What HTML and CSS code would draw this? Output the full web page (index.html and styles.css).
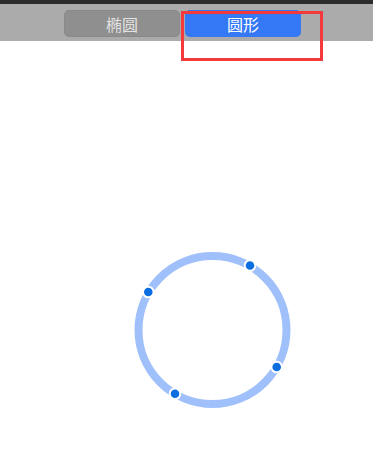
FILE: index.html
```html
<!DOCTYPE html>
<html lang="zh">
<head>
<meta charset="utf-8">
<link rel="stylesheet" href="styles.css">
</head>
<body>
<div class="topbar"></div>
<div class="segbar">
  <div class="seg seg-off">椭圆</div>
  <div class="seg seg-on">圆形</div>
</div>
<div class="highlight"></div>
<svg class="canvas" width="373" height="412" viewBox="0 0 373 412">
  <circle cx="212.5" cy="289" r="74" fill="none" stroke="#a0c0fb" stroke-width="8"/>
  <g fill="#0a6de0" stroke="#ffffff" stroke-width="2">
    <circle cx="250" cy="224.5" r="5.3"/>
    <circle cx="148.3" cy="251" r="5.3"/>
    <circle cx="276.7" cy="326" r="5.3"/>
    <circle cx="175" cy="352.7" r="5.3"/>
  </g>
</svg>
</body>
</html>
```
FILE: styles.css
```css
html, body {
  margin: 0;
  padding: 0;
  background: #ffffff;
  width: 373px;
  height: 453px;
  overflow: hidden;
  font-family: "Noto Sans CJK SC", "Noto Sans", sans-serif;
}
.topbar {
  height: 4px;
  background: #2c2c2c;
}
.segbar {
  height: 37px;
  box-sizing: border-box;
  background: #ababab;
  display: flex;
  gap: 5px;
  padding-left: 64px;
  padding-top: 6px;
}
.seg {
  width: 116px;
  height: 27px;
  box-sizing: border-box;
  border-radius: 5px;
  display: flex;
  align-items: center;
  justify-content: center;
  font-size: 16px;
  line-height: 1;
}
.seg-off {
  background: #8f8f8f;
  border: 1px solid #898989;
  color: #e2e2e2;
}
.seg-on {
  background: #3478f6;
  color: #ffffff;
}
.highlight {
  position: absolute;
  left: 181px;
  top: 11px;
  width: 142px;
  height: 50px;
  box-sizing: border-box;
  border: 3px solid #f23a3a;
}
.canvas {
  display: block;
}
```
